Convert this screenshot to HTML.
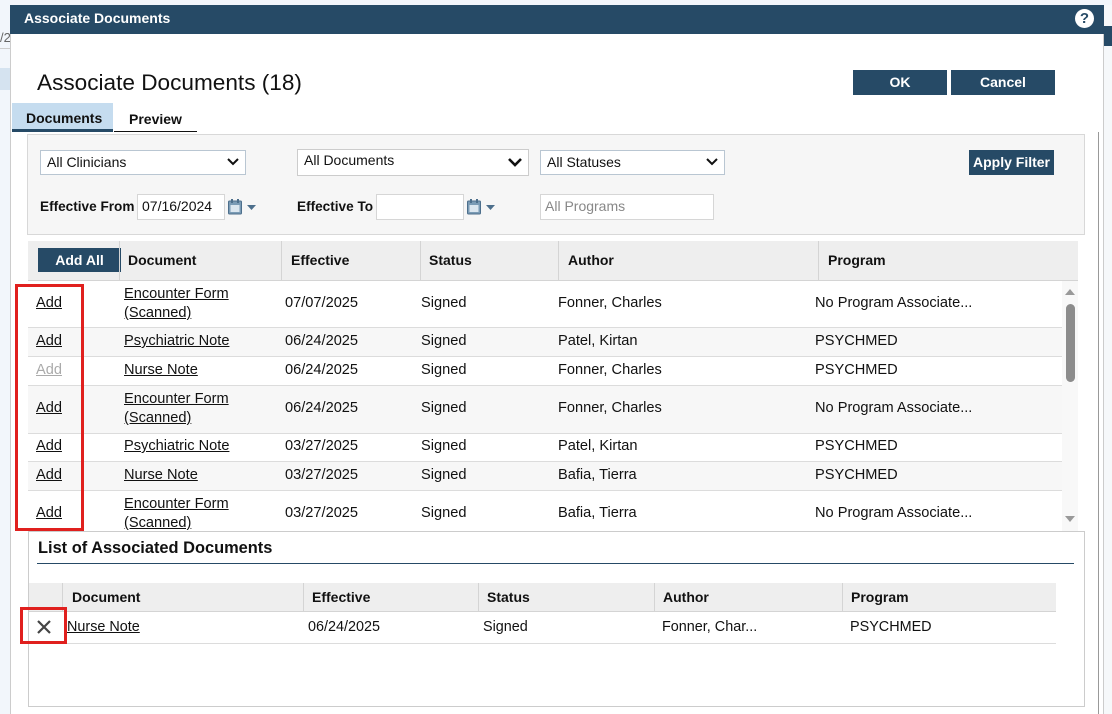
<!DOCTYPE html>
<html><head><style>
*{box-sizing:border-box;margin:0;padding:0}
body{width:1112px;height:714px;overflow:hidden;background:#fff;font-family:"Liberation Sans",sans-serif;font-size:14px;color:#111;position:relative}
.a{position:absolute}
.btn{position:absolute;background:#264a66;color:#fff;font-weight:bold;font-size:14px;text-align:center}
.sel{position:absolute;background:#fff;border:1px solid #b9c6d2;font-size:14px;padding:3px 6px}
.sel svg{position:absolute;right:6px;top:7px}
.inp{position:absolute;background:#fff;border:1px solid #d6d6d6;font-size:14px;padding:3px 4px}
.lbl{position:absolute;font-weight:bold;font-size:14px}
.th{position:absolute;font-weight:bold;font-size:14px}
.sep{position:absolute;width:1px;background:#d4d4d4}
.row{position:absolute;left:28px;width:1034px;border-bottom:1px solid #dcdcdc}
.row span{position:absolute;font-size:14.6px}
u{text-decoration:underline}
</style></head><body>
<div class="a" style="left:0;top:0;width:10px;height:714px;background:#f2f6fb"></div>
<div class="a" style="left:0;top:48px;width:10px;height:1px;background:#ccc"></div>
<div class="a" style="left:0;top:68px;width:10px;height:22px;background:#d5e3f0"></div>
<div class="a" style="left:0;top:30px;width:10px;color:#666;font-size:13px">/2</div>
<div class="a" style="left:1104px;top:0;width:8px;height:714px;background:#f6f8fa"></div>
<div class="a" style="left:1104px;top:26px;width:8px;height:20px;background:#264a66"></div>
<div class="a" style="left:0;top:0;width:1112px;height:5px;background:#f2f6fb"></div>
<!-- dialog -->
<div class="a" style="left:10px;top:5px;width:1094px;height:709px;background:#fff;border-left:1px solid #ccc;border-right:1px solid #ccc"></div>
<div class="a" style="left:10px;top:5px;width:1094px;height:29px;background:#264a66;color:#fff;font-weight:bold;font-size:14px;padding:5px 14px">Associate Documents</div>
<div class="a" style="left:1075px;top:9px;width:19px;height:19px;border-radius:50%;background:#fff;color:#264a66;font-weight:bold;font-size:15px;text-align:center;line-height:19px">?</div>
<div class="a" style="left:37px;top:70px;font-size:22.6px">Associate Documents (18)</div>
<div class="btn" style="left:853px;top:70px;width:94px;height:25px;line-height:25px">OK</div>
<div class="btn" style="left:951px;top:70px;width:104px;height:25px;line-height:25px">Cancel</div>
<!-- tabs -->
<div class="a" style="left:12px;top:103px;width:101px;height:29px;background:#c5dcef;border-bottom:3px solid #264a66;font-weight:bold;padding:7px 0 0 14px">Documents</div>
<div class="a" style="left:114px;top:103px;width:83px;height:29px;border-bottom:1px solid #111;font-weight:bold;padding:8px 0 0 15px">Preview</div>
<div class="a" style="left:1098px;top:132px;width:1px;height:582px;background:#999"></div>
<!-- filter panel -->
<div class="a" style="left:27px;top:134px;width:1058px;height:101px;background:#f6f6f6;border:1px solid #d8d8d8"></div>
<div class="sel" style="left:40px;top:150px;width:206px;height:25px">All Clinicians<svg width="12" height="9"><path d="M1 1l5 5 5-5" stroke="#111" stroke-width="2" fill="none"/></svg></div>
<div class="sel" style="left:297px;top:149px;width:232px;height:27px;border-color:#ccc;padding-top:2px">All Documents<svg width="14" height="10" style="top:8px"><path d="M1 1l6 6 6-6" stroke="#111" stroke-width="2.6" fill="none"/></svg></div>
<div class="sel" style="left:540px;top:150px;width:185px;height:25px">All Statuses<svg width="12" height="9"><path d="M1 1l5 5 5-5" stroke="#111" stroke-width="2" fill="none"/></svg></div>
<div class="btn" style="left:969px;top:150px;width:85px;height:25px;line-height:25px">Apply Filter</div>
<div class="lbl" style="left:40px;top:199px;font-size:13.6px">Effective From</div>
<div class="inp" style="left:137px;top:194px;width:88px;height:26px">07/16/2024</div>
<svg class="a" style="left:228px;top:199px" width="32" height="16"><rect x="0.5" y="2" width="13" height="13" rx="1" fill="#7a9bb5" stroke="#4d6f8c"/><rect x="3" y="0" width="2" height="4" fill="#4d6f8c"/><rect x="9" y="0" width="2" height="4" fill="#4d6f8c"/><rect x="2.5" y="6" width="9" height="7" fill="#dbe6ef"/><path d="M19 6h9l-4.5 5z" fill="#4d6f8c"/></svg>
<div class="lbl" style="left:297px;top:199px;font-size:13.6px">Effective To</div>
<div class="inp" style="left:376px;top:194px;width:88px;height:26px"></div>
<svg class="a" style="left:467px;top:199px" width="32" height="16"><rect x="0.5" y="2" width="13" height="13" rx="1" fill="#7a9bb5" stroke="#4d6f8c"/><rect x="3" y="0" width="2" height="4" fill="#4d6f8c"/><rect x="9" y="0" width="2" height="4" fill="#4d6f8c"/><rect x="2.5" y="6" width="9" height="7" fill="#dbe6ef"/><path d="M19 6h9l-4.5 5z" fill="#4d6f8c"/></svg>
<div class="inp" style="left:540px;top:194px;width:174px;height:26px;color:#888">All Programs</div>
<!-- grid header -->
<div class="a" style="left:28px;top:241px;width:1050px;height:40px;background:#eee;border-bottom:1px solid #d4d4d4"></div>
<div class="btn" style="left:38px;top:248px;width:83px;height:24px;line-height:24px">Add All</div>
<div class="sep" style="left:119px;top:241px;height:40px"></div>
<div class="sep" style="left:281px;top:241px;height:40px"></div>
<div class="sep" style="left:420px;top:241px;height:40px"></div>
<div class="sep" style="left:558px;top:241px;height:40px"></div>
<div class="sep" style="left:818px;top:241px;height:40px"></div>
<div class="th" style="left:128px;top:252px">Document</div>
<div class="th" style="left:291px;top:252px">Effective</div>
<div class="th" style="left:429px;top:252px">Status</div>
<div class="th" style="left:568px;top:252px">Author</div>
<div class="th" style="left:828px;top:252px">Program</div>
<!-- rows -->
<div class="row" style="top:281px;height:47px;background:#fff"><span style="left:8px;top:14px"><u>Add</u></span><span style="left:96px;top:4px;line-height:19px"><u>Encounter Form</u><br><u>(Scanned)</u></span><span style="left:257px;top:14px">07/07/2025</span><span style="left:393px;top:14px">Signed</span><span style="left:530px;top:14px">Fonner, Charles</span><span style="left:787px;top:14px">No Program Associate...</span></div>
<div class="row" style="top:328px;height:29px;background:#f7f7f7"><span style="left:8px;top:5px"><u>Add</u></span><span style="left:96px;top:5px"><u>Psychiatric Note</u></span><span style="left:257px;top:5px">06/24/2025</span><span style="left:393px;top:5px">Signed</span><span style="left:530px;top:5px">Patel, Kirtan</span><span style="left:787px;top:5px">PSYCHMED</span></div>
<div class="row" style="top:357px;height:29px;background:#fff"><span style="left:8px;top:5px;color:#aaa"><u>Add</u></span><span style="left:96px;top:5px"><u>Nurse Note</u></span><span style="left:257px;top:5px">06/24/2025</span><span style="left:393px;top:5px">Signed</span><span style="left:530px;top:5px">Fonner, Charles</span><span style="left:787px;top:5px">PSYCHMED</span></div>
<div class="row" style="top:386px;height:48px;background:#f7f7f7"><span style="left:8px;top:14px"><u>Add</u></span><span style="left:96px;top:4px;line-height:19px"><u>Encounter Form</u><br><u>(Scanned)</u></span><span style="left:257px;top:14px">06/24/2025</span><span style="left:393px;top:14px">Signed</span><span style="left:530px;top:14px">Fonner, Charles</span><span style="left:787px;top:14px">No Program Associate...</span></div>
<div class="row" style="top:434px;height:28px;background:#fff"><span style="left:8px;top:4px"><u>Add</u></span><span style="left:96px;top:4px"><u>Psychiatric Note</u></span><span style="left:257px;top:4px">03/27/2025</span><span style="left:393px;top:4px">Signed</span><span style="left:530px;top:4px">Patel, Kirtan</span><span style="left:787px;top:4px">PSYCHMED</span></div>
<div class="row" style="top:462px;height:29px;background:#f7f7f7"><span style="left:8px;top:5px"><u>Add</u></span><span style="left:96px;top:5px"><u>Nurse Note</u></span><span style="left:257px;top:5px">03/27/2025</span><span style="left:393px;top:5px">Signed</span><span style="left:530px;top:5px">Bafia, Tierra</span><span style="left:787px;top:5px">PSYCHMED</span></div>
<div class="row" style="top:491px;height:41px;background:#fff;border:none;overflow:hidden"><span style="left:8px;top:14px"><u>Add</u></span><span style="left:96px;top:4px;line-height:19px"><u>Encounter Form</u><br><u>(Scanned)</u></span><span style="left:257px;top:14px">03/27/2025</span><span style="left:393px;top:14px">Signed</span><span style="left:530px;top:14px">Bafia, Tierra</span><span style="left:787px;top:14px">No Program Associate...</span></div>
<!-- scrollbar -->
<div class="a" style="left:1062px;top:281px;width:16px;height:250px;background:#f8f8f8"></div>
<svg class="a" style="left:1065px;top:288px" width="10" height="8"><path d="M0 7h10L5 1z" fill="#999"/></svg>
<div class="a" style="left:1066px;top:304px;width:9px;height:78px;border-radius:5px;background:#8c8c8c"></div>
<svg class="a" style="left:1065px;top:515px" width="10" height="8"><path d="M0 1h10L5 7z" fill="#999"/></svg>
<!-- red box -->
<div class="a" style="left:15px;top:284px;width:69px;height:247px;border:3px solid #e0201e"></div>
<!-- lower panel -->
<div class="a" style="left:28px;top:531px;width:1057px;height:176px;border:1px solid #ccc;border-top:1px solid #ccc"></div>
<div class="a" style="left:38px;top:539px;font-weight:bold;font-size:16.4px">List of Associated Documents</div>
<div class="a" style="left:37px;top:563px;width:1037px;height:1px;background:#264a66"></div>
<div class="a" style="left:29px;top:583px;width:1027px;height:29px;background:#eee;border-bottom:1px solid #d4d4d4"></div>
<div class="sep" style="left:62px;top:583px;height:29px"></div>
<div class="sep" style="left:303px;top:583px;height:29px"></div>
<div class="sep" style="left:478px;top:583px;height:29px"></div>
<div class="sep" style="left:654px;top:583px;height:29px"></div>
<div class="sep" style="left:842px;top:583px;height:29px"></div>
<div class="th" style="left:72px;top:589px">Document</div>
<div class="th" style="left:312px;top:589px">Effective</div>
<div class="th" style="left:487px;top:589px">Status</div>
<div class="th" style="left:663px;top:589px">Author</div>
<div class="th" style="left:851px;top:589px">Program</div>
<div class="a" style="left:29px;top:612px;width:1027px;height:32px;border-bottom:1px solid #dcdcdc"></div>
<svg class="a" style="left:36px;top:619px" width="16" height="16"><path d="M2 2l12 12M14 2L2 14" stroke="#444" stroke-width="2.2"/></svg>
<div class="a" style="left:67px;top:619px;font-size:14.4px"><u>Nurse Note</u></div>
<div class="a" style="left:308px;top:619px;font-size:14.4px">06/24/2025</div>
<div class="a" style="left:483px;top:619px;font-size:14.4px">Signed</div>
<div class="a" style="left:662px;top:619px;font-size:14.4px">Fonner, Char...</div>
<div class="a" style="left:850px;top:619px;font-size:14.4px">PSYCHMED</div>
<div class="a" style="left:20px;top:607px;width:47px;height:37px;border:3px solid #e0201e"></div>
</body></html>
